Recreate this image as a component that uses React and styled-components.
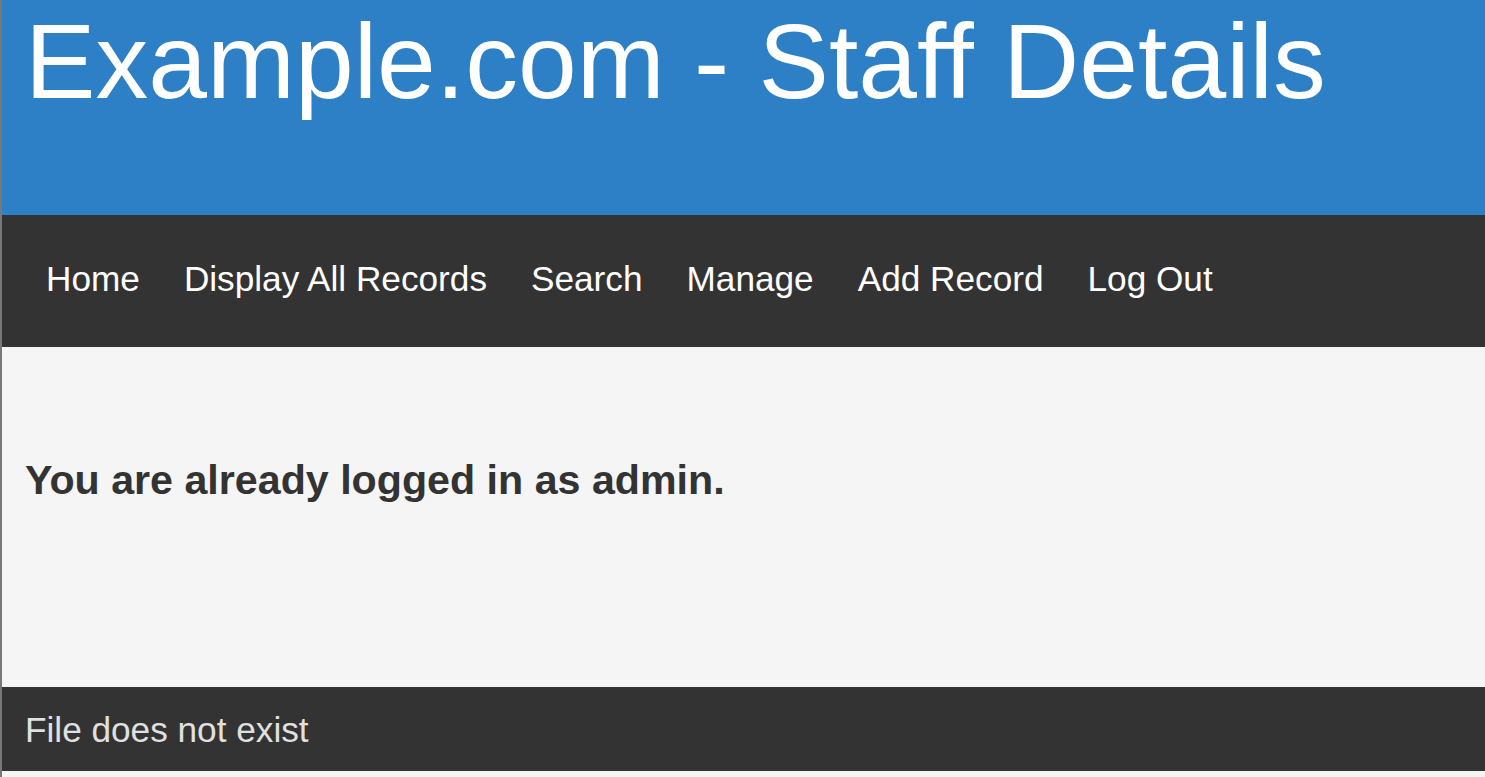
import React from 'react';
import styled, { createGlobalStyle } from 'styled-components';

const GlobalStyle = createGlobalStyle`
  html, body {
    margin: 0;
    padding: 0;
    background: #f5f5f5;
  }

  body {
    font-family: 'Liberation Sans', Arial, sans-serif;
    font-size: 35.2px;
  }
`;

const Page = styled.div`
  min-height: 777px;
  border-left: 2px solid #787878;
  box-sizing: border-box;
  background: #f5f5f5;
`;

const Header = styled.header`
  height: 215px;
  box-sizing: border-box;
  padding: 8px 23px 0;
  background: #2d7fc6;
`;

const Title = styled.h1`
  margin: 0;
  font-size: 105.6px;
  font-weight: normal;
  line-height: 106px;
  color: #fff;
  white-space: nowrap;
`;

const Navbar = styled.nav`
  height: 132px;
  box-sizing: border-box;
  background: #333;
`;

const NavList = styled.ul`
  list-style: none;
  display: flex;
  margin: 0;
  padding: 44px 0 0 22px;
`;

const NavLink = styled.a`
  display: block;
  padding: 0 22px;
  color: #fff;
  text-decoration: none;
  line-height: normal;
`;

const Main = styled.main`
  height: 340px;
  box-sizing: border-box;
  padding: 110px 23px 0;
`;

const Message = styled.h3`
  margin: 0;
  font-size: 41.2px;
  font-weight: bold;
  line-height: normal;
  color: #333;
`;

const Footer = styled.footer`
  height: 84px;
  box-sizing: border-box;
  padding: 23px 23px 0;
  background: #333;
  color: #e0e0e0;
  line-height: normal;
`;

const links = ['Home', 'Display All Records', 'Search', 'Manage', 'Add Record', 'Log Out'];

export default function App() {
  return (
    <>
      <GlobalStyle />
      <Page>
        <Header>
          <Title>Example.com - Staff Details</Title>
        </Header>
        <Navbar>
          <NavList>
            {links.map((label) => (
              <li key={label}>
                <NavLink href="#">{label}</NavLink>
              </li>
            ))}
          </NavList>
        </Navbar>
        <Main>
          <Message>You are already logged in as admin.</Message>
        </Main>
        <Footer>File does not exist</Footer>
      </Page>
    </>
  );
}
